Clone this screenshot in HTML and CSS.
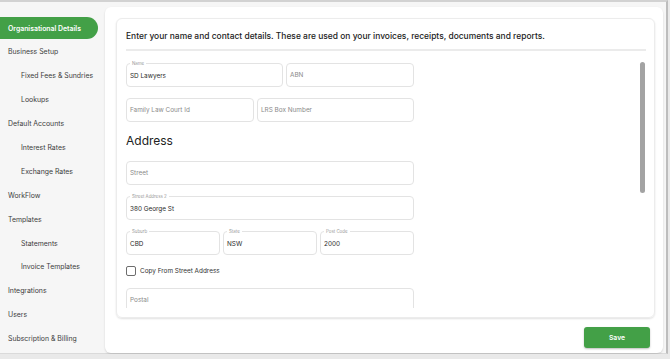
FILE: index.html
```html
<!DOCTYPE html>
<html lang="en">
<head>
    <meta charset="UTF-8">
    <meta name="viewport" content="width=device-width, initial-scale=1.0">
    <title>Organisational Details</title>
    <link rel="stylesheet" href="styles.css">
</head>
<body>
<div class="frame">

    <!-- Settings menu -->
    <nav class="sidebar">
        <a class="nav-item active">Organisational Details</a>
        <a class="nav-item">Business Setup</a>
        <a class="nav-item sub">Fixed Fees &amp; Sundries</a>
        <a class="nav-item sub">Lookups</a>
        <a class="nav-item">Default Accounts</a>
        <a class="nav-item sub">Interest Rates</a>
        <a class="nav-item sub">Exchange Rates</a>
        <a class="nav-item">WorkFlow</a>
        <a class="nav-item">Templates</a>
        <a class="nav-item sub">Statements</a>
        <a class="nav-item sub">Invoice Templates</a>
        <a class="nav-item">Integrations</a>
        <a class="nav-item">Users</a>
        <a class="nav-item">Subscription &amp; Billing</a>
    </nav>

    <!-- Main panel -->
    <main class="panel">
        <section class="card">
            <p class="intro">Enter your name and contact details. These are used on your invoices, receipts, documents and reports.</p>
            <div class="divider"></div>

            <div class="scroll-wrap">
                <div class="fields">
                    <div class="row cols-name">
                        <div class="field filled"><span class="field-label">Name</span>SD Lawyers</div>
                        <div class="field">ABN</div>
                    </div>
                    <div class="row cols-court">
                        <div class="field">Family Law Court Id</div>
                        <div class="field">LRS Box Number</div>
                    </div>

                    <h2 class="section-title">Address</h2>

                    <div class="row">
                        <div class="field">Street</div>
                    </div>
                    <div class="row">
                        <div class="field filled"><span class="field-label">Street Address 2</span>380 George St</div>
                    </div>
                    <div class="row cols-three">
                        <div class="field filled"><span class="field-label">Suburb</span>CBD</div>
                        <div class="field filled"><span class="field-label">State</span>NSW</div>
                        <div class="field filled"><span class="field-label">Post Code</span>2000</div>
                    </div>

                    <label class="check">
                        <span class="box"></span>
                        Copy From Street Address
                    </label>

                    <div class="row">
                        <div class="field">Postal</div>
                    </div>
                </div>
                <div class="scrollbar"><div class="thumb"></div></div>
            </div>
        </section>

        <div class="actions">
            <button class="btn-save">Save</button>
        </div>
    </main>

</div>
</body>
</html>
```

FILE: styles.css
```css
* {
    box-sizing: border-box;
}

body {
    margin: 0;
    padding: 0;
    background-color: #e9e9e9;
    font-family: Inter, "Open Sans", sans-serif;
    color: #2b2b2b;
}

.frame {
    display: flex;
    width: 668px;
    height: 354px;
    background-color: #f6f6f6;
    border-top: 2px solid #d2d2d2;
    border-right: 2px solid #bdbdbd;
    border-bottom: 1px solid #dadada;
}

/* sidebar */

.sidebar {
    width: 105px;
    flex-shrink: 0;
    padding-top: 15px;
    display: flex;
    flex-direction: column;
}

.nav-item {
    display: flex;
    align-items: center;
    height: 23.9px;
    padding-left: 8px;
    font-size: 6.9px;
    color: #3d3d3d;
}

.nav-item.sub {
    padding-left: 21px;
}

.nav-item.active {
    height: 22px;
    margin-bottom: 1px;
    margin-right: 7px;
    background-color: #43a047;
    color: #fff;
    font-weight: 600;
    border-radius: 0 11px 11px 0;
}

/* main panel */

.panel {
    flex: 1;
    margin: 5px 3px 0 0;
    padding: 11px 8px 5px 11px;
    background-color: #fff;
    border-radius: 6px;
    box-shadow: 0 1px 2px rgba(0, 0, 0, 0.15);
    display: flex;
    flex-direction: column;
}

.card {
    height: 300px;
    padding: 0 8px 0 9px;
    border: 1px solid #ececec;
    border-radius: 6px;
    box-shadow: 0 1px 2px rgba(0, 0, 0, 0.12);
    display: flex;
    flex-direction: column;
}

.intro {
    margin: 0;
    padding-top: 12px;
    height: 30px;
    font-size: 8.45px;
    font-weight: 500;
    color: #222;
}

.divider {
    height: 2px;
    background-color: #ebebeb;
}

.scroll-wrap {
    flex: 1;
    display: flex;
    min-height: 0;
    margin-bottom: 9px;
}

.fields {
    flex: 1;
    overflow: hidden;
    padding-top: 12px;
}

.scrollbar {
    width: 5px;
    margin-right: 1px;
    padding-top: 11px;
}

.thumb {
    height: 131px;
    background-color: #a3a3a3;
    border-radius: 3px;
}

.row {
    display: grid;
    grid-template-columns: 1fr;
    gap: 3px;
    width: 288px;
    margin-bottom: 11px;
}

.row + .cols-three {
    margin-top: 1px;
}

.cols-name {
    grid-template-columns: 157px 128px;
}

.cols-court {
    grid-template-columns: 128px 157px;
}

.cols-three {
    grid-template-columns: 94px 94px 94px;
}

.field {
    position: relative;
    height: 24px;
    padding: 0 3px;
    display: flex;
    align-items: center;
    border: 1px solid #e3e3e3;
    border-radius: 4px;
    font-size: 6.4px;
    color: #8a8a8a;
}

.field.filled {
    color: #2b2b2b;
    padding-top: 1px;
}

.field-label {
    position: absolute;
    top: -3px;
    left: 3px;
    padding: 0 2px;
    background-color: #fff;
    font-size: 4.4px;
    line-height: 5px;
    color: #999;
}

.section-title {
    margin: 9px 0 13px;
    font-size: 12px;
    font-weight: 400;
    color: #222;
}

.check {
    display: flex;
    align-items: center;
    gap: 4px;
    height: 10px;
    margin: 2px 0 12px;
    font-size: 6.4px;
    color: #333;
}

.box {
    width: 10px;
    height: 10px;
    border: 1.2px solid #6d6d6d;
    border-radius: 2px;
}

/* footer */

.actions {
    display: flex;
    justify-content: flex-end;
    padding: 9px 5px 0 0;
}

.btn-save {
    width: 66px;
    height: 21px;
    border: none;
    border-radius: 3px;
    background-color: #43a047;
    box-shadow: 0 1px 2px rgba(0, 0, 0, 0.25);
    color: #fff;
    font-family: Inter, sans-serif;
    font-size: 6.8px;
    font-weight: 600;
}
```
